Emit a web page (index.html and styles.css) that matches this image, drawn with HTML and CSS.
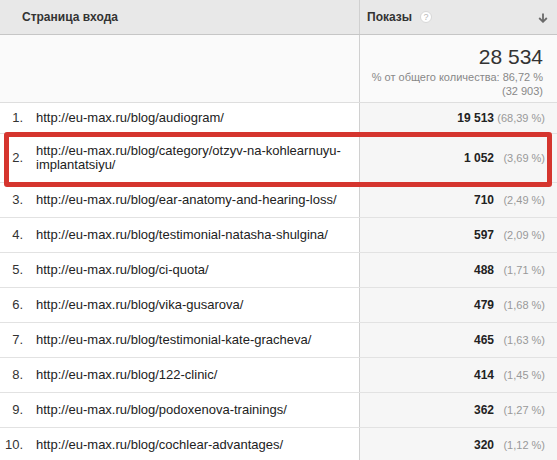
FILE: index.html
```html
<!DOCTYPE html>
<html lang="ru">
<head>
<meta charset="utf-8">
<link rel="stylesheet" href="styles.css">
</head>
<body>
<div class="report">
  <div class="row head">
    <div class="cell left"><span class="head-title">Страница входа</span></div>
    <div class="cell right head-right">
      <span class="head-title">Показы</span>
      <span class="help">?</span>
      <svg class="sort" width="10" height="10" viewBox="0 0 10 10"><path d="M5 0.5V8.5M1.2 5L5 8.8L8.8 5" fill="none" stroke="#6a6a6a" stroke-width="1.8"/></svg>
    </div>
  </div>
  <div class="row summary">
    <div class="cell left"></div>
    <div class="cell right sum-right">
      <div class="total">28 534</div>
      <div class="share">% от общего количества: 86,72 %</div>
      <div class="share">(32 903)</div>
    </div>
  </div>
  <div class="row data r1">
    <div class="cell left"><span class="idx">1.</span><span class="url">http://eu-max.ru/blog/audiogram/</span></div>
    <div class="cell right val"><b>19 513</b><span class="pct">(68,39 %)</span></div>
  </div>
  <div class="row data r2">
    <div class="cell left"><span class="idx">2.</span><span class="url">http://eu-max.ru/blog/category/otzyv-na-kohlearnuyu-<br>implantatsiyu/</span></div>
    <div class="cell right val"><b>1 052</b><span class="pct">(3,69 %)</span></div>
  </div>
  <div class="row data">
    <div class="cell left"><span class="idx">3.</span><span class="url">http://eu-max.ru/blog/ear-anatomy-and-hearing-loss/</span></div>
    <div class="cell right val"><b>710</b><span class="pct">(2,49 %)</span></div>
  </div>
  <div class="row data">
    <div class="cell left"><span class="idx">4.</span><span class="url">http://eu-max.ru/blog/testimonial-natasha-shulgina/</span></div>
    <div class="cell right val"><b>597</b><span class="pct">(2,09 %)</span></div>
  </div>
  <div class="row data">
    <div class="cell left"><span class="idx">5.</span><span class="url">http://eu-max.ru/blog/ci-quota/</span></div>
    <div class="cell right val"><b>488</b><span class="pct">(1,71 %)</span></div>
  </div>
  <div class="row data">
    <div class="cell left"><span class="idx">6.</span><span class="url">http://eu-max.ru/blog/vika-gusarova/</span></div>
    <div class="cell right val"><b>479</b><span class="pct">(1,68 %)</span></div>
  </div>
  <div class="row data">
    <div class="cell left"><span class="idx">7.</span><span class="url">http://eu-max.ru/blog/testimonial-kate-gracheva/</span></div>
    <div class="cell right val"><b>465</b><span class="pct">(1,63 %)</span></div>
  </div>
  <div class="row data">
    <div class="cell left"><span class="idx">8.</span><span class="url">http://eu-max.ru/blog/122-clinic/</span></div>
    <div class="cell right val"><b>414</b><span class="pct">(1,45 %)</span></div>
  </div>
  <div class="row data">
    <div class="cell left"><span class="idx">9.</span><span class="url">http://eu-max.ru/blog/podoxenova-trainings/</span></div>
    <div class="cell right val"><b>362</b><span class="pct">(1,27 %)</span></div>
  </div>
  <div class="row data">
    <div class="cell left"><span class="idx">10.</span><span class="url">http://eu-max.ru/blog/cochlear-advantages/</span></div>
    <div class="cell right val"><b>320</b><span class="pct">(1,12 %)</span></div>
  </div>
  <div class="highlight"></div>
</div>
</body>
</html>
```

FILE: styles.css
```css
html, body {
  margin: 0;
  padding: 0;
  background: #fff;
}
body {
  font-family: "Liberation Sans", Arial, sans-serif;
  color: #222;
  overflow: hidden;
}
.report {
  position: relative;
  width: 557px;
}
.row {
  display: grid;
  grid-template-columns: 360px 1fr;
  box-sizing: border-box;
}
.cell {
  box-sizing: border-box;
}
.left {
  border-right: 1px solid #d0d0d0;
}
.head {
  height: 35px;
  background: #e8e8e8;
  border-bottom: 1px solid #c6c6c6;
}
.head .left {
  padding-left: 22px;
  display: flex;
  align-items: center;
}
.head-title {
  font-size: 12px;
  font-weight: bold;
  color: #333;
}
.head-right {
  display: flex;
  align-items: center;
  padding-left: 7px;
  padding-right: 9px;
}
.help {
  margin-left: 8px;
  width: 12px;
  height: 12px;
  border-radius: 50%;
  background: #fff;
  border: 1px solid #d8d8d8;
  box-sizing: border-box;
  color: #b8b8b8;
  font-size: 9px;
  line-height: 11px;
  text-align: center;
}
.sort {
  margin-left: auto;
  margin-top: 1px;
}
.summary {
  height: 68px;
  background: #fafafa;
  border-bottom: 1px solid #dedede;
}
.sum-right {
  text-align: right;
  padding-right: 14px;
  padding-top: 9px;
}
.total {
  font-size: 21px;
  line-height: 26px;
  color: #333;
}
.share {
  font-size: 11px;
  line-height: 14px;
  color: #888;
}
.data {
  height: 35px;
  border-bottom: 1px solid #e2e2e2;
}
.data.r1 { height: 31px; }
.data.r2 { height: 49px; }
.data .left {
  display: flex;
  align-items: center;
  font-size: 13px;
  line-height: 14px;
}
.idx {
  width: 23px;
  text-align: right;
  color: #333;
  flex: none;
}
.url {
  margin-left: 13px;
  color: #222;
}
.val {
  background: #f6f6f6;
  display: flex;
  align-items: center;
  justify-content: flex-end;
  padding-right: 12px;
}
.val b {
  font-size: 12px;
  color: #222;
}
.pct {
  min-width: 48px;
  margin-left: 3px;
  text-align: right;
  font-size: 11px;
  color: #999;
}
.highlight {
  position: absolute;
  left: 4px;
  top: 132px;
  width: 548px;
  height: 55px;
  box-sizing: border-box;
  border: 5px solid #d5352e;
  border-radius: 3px;
}
```
